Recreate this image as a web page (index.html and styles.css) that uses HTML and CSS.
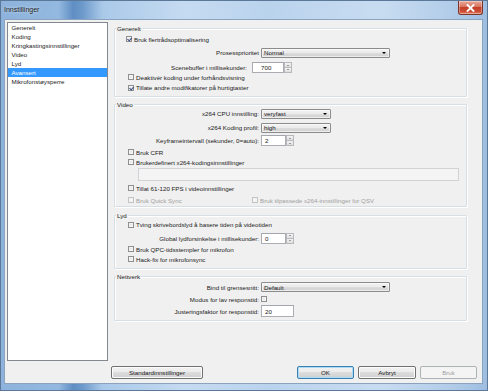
FILE: index.html
```html
<!DOCTYPE html>
<html>
<head>
<meta charset="utf-8">
<title>Innstillinger</title>
<link rel="stylesheet" href="styles.css">
</head>
<body>
<div class="window">
  <div class="titlebar">
    <span class="title">Innstillinger</span>
    <div class="close">
      <svg width="9" height="8" viewBox="0 0 9 8"><path d="M1.5 1 L7.5 7 M7.5 1 L1.5 7" stroke="#fff" stroke-width="1.8" stroke-linecap="square"/></svg>
    </div>
  </div>
  <div class="client">
    <div class="main">
      <ul class="list">
        <li>Generelt</li>
        <li>Koding</li>
        <li>Kringkastingsinnstillinger</li>
        <li>Video</li>
        <li>Lyd</li>
        <li class="sel">Avansert</li>
        <li>Mikrofonstøysperre</li>
      </ul>
      <div class="panel">
        <div class="group g-gen">
          <div class="gtitle"><span>Generelt</span></div>
          <div class="row cb r-cb1"><span class="box on"></span><span class="ct">Bruk flertrådsoptimalisering</span></div>
          <div class="row fld r-prio"><span class="lbl">Prosessprioritet</span><div class="combo wide"><span>Normal</span><i class="arr"></i></div></div>
          <div class="row fld r-scene"><span class="lbl lbl-short">Scenebuffer i millisekunder:</span><div class="edit e-scene">700</div><div class="spin"><b><i class="up"></i></b><b><i class="dn"></i></b></div></div>
          <div class="row cb r-deakt"><span class="box"></span><span class="ct">Deaktivér koding under forhåndsvisning</span></div>
          <div class="row cb r-till"><span class="box on"></span><span class="ct">Tillate andre modifikatorer på hurtigtaster</span></div>
        </div>
        <div class="group g-vid">
          <div class="gtitle"><span>Video</span></div>
          <div class="row fld r-cpu"><span class="lbl">x264 CPU innstilling:</span><div class="combo narrow"><span>veryfast</span><i class="arr"></i></div></div>
          <div class="row fld r-prof"><span class="lbl">x264 Koding profil:</span><div class="combo narrow"><span>high</span><i class="arr"></i></div></div>
          <div class="row fld r-key"><span class="lbl">Keyframeintervall (sekunder, 0=auto):</span><div class="edit e-num">2</div><div class="spin"><b><i class="up"></i></b><b><i class="dn"></i></b></div></div>
          <div class="row cb r-cfr"><span class="box"></span><span class="ct">Bruk CFR</span></div>
          <div class="row cb r-def"><span class="box"></span><span class="ct">Brukerdefinert x264-kodingsinnstillinger</span></div>
          <div class="row r-wide"><div class="edit e-wide dis"></div></div>
          <div class="row cb r-fps"><span class="box"></span><span class="ct">Tillat 61-120 FPS i videoinnstillinger</span></div>
          <div class="row cb r-qs dis">
            <span class="item i-qs"><span class="box"></span><span class="ct">Bruk Quick Sync</span></span>
            <span class="item"><span class="box"></span><span class="ct">Bruk tilpassede x264-innstillinger for QSV</span></span>
          </div>
        </div>
        <div class="group g-lyd">
          <div class="gtitle"><span>Lyd</span></div>
          <div class="row cb r-tving"><span class="box"></span><span class="ct">Tving skrivebordslyd å basere tiden på videotiden</span></div>
          <div class="row fld r-glob"><span class="lbl">Global lydforsinkelse i millisekunder:</span><div class="edit e-num">0</div><div class="spin"><b><i class="up"></i></b><b><i class="dn"></i></b></div></div>
          <div class="row cb r-qpc"><span class="box"></span><span class="ct">Bruk QPC-tidsstempler for mikrofon</span></div>
          <div class="row cb r-hack"><span class="box"></span><span class="ct">Hack-fix for mikrofonsync</span></div>
        </div>
        <div class="group g-net">
          <div class="gtitle"><span>Nettverk</span></div>
          <div class="row fld r-bind"><span class="lbl">Bind til grensesnitt:</span><div class="combo wide"><span>Default</span><i class="arr"></i></div></div>
          <div class="row fld r-modus"><span class="lbl">Modus for lav responstid:</span><span class="box"></span></div>
          <div class="row fld r-just"><span class="lbl">Justeringsfaktor for responstid:</span><div class="edit e-just">20</div></div>
        </div>
      </div>
    </div>
    <div class="buttons">
      <div class="btn b-std">Standardinnstillinger</div>
      <div class="btn b-ok def">OK</div>
      <div class="btn b-cancel">Avbryt</div>
      <div class="btn b-apply dis">Bruk</div>
    </div>
  </div>
</div>
</body>
</html>
```

FILE: styles.css
```css
* { box-sizing: border-box; margin: 0; padding: 0; }
html, body { width: 488px; height: 391px; overflow: hidden; }
body {
  font-family: "Liberation Sans", Arial, sans-serif;
  font-size: 6.2px;
  color: #1a1a1a;
  background: #fff;
}
.window {
  width: 488px;
  height: 391px;
  display: flex;
  flex-direction: column;
  background:
    linear-gradient(90deg, #8db3dc 0, #94b9e0 12%, #5f8ec3 15%, #6e9acb 17%, #aac9e9 21%, #c5dbf1 38%, #bad3ed 55%, #c8dcf1 78%, #b3cde9 92%, #9dbde0 100%);
  box-shadow: inset 0 0 0 1px #5b7898;
}
.titlebar {
  height: 20px;
  display: flex;
  align-items: flex-start;
  padding-left: 4px;
}
.title {
  font-size: 7px;
  line-height: 7px;
  margin-top: 6px;
  color: #1b1b1b;
  text-shadow: 0 0 3px #e8f2fc;
}
.close {
  margin-left: auto;
  margin-right: 5px;
  margin-top: 1px;
  width: 25px;
  height: 14px;
  border: 1px solid #7a3528;
  border-top: none;
  border-radius: 0 0 3px 3px;
  background: linear-gradient(#e9a99a 0, #d8735f 45%, #c3412a 50%, #cc4a32 80%, #e2866e 100%);
  display: flex;
  align-items: center;
  justify-content: center;
  box-shadow: inset 0 0 0 1px rgba(255,255,255,0.35);
}
.client {
  flex: 1;
  margin: 0 6px 8px 5px;
  background: #f0f0f0;
  display: flex;
  flex-direction: column;
  box-shadow: 0 0 0 1px #8aa4c0;
}
.main {
  display: flex;
  height: 341px;
  padding: 2px 0 0 2px;
}
.list {
  width: 101px;
  height: 339px;
  border: 1px solid #828790;
  background: #fff;
  list-style: none;
}
.list li {
  height: 9px;
  line-height: 9px;
  padding-left: 3.5px;
  white-space: nowrap;
}
.list li.sel { background: #3399ff; color: #fff; }

.panel {
  margin-left: 6px;
  width: 353px;
  display: flex;
  flex-direction: column;
}
.group {
  border: 1px solid #d5dfe5;
  box-shadow: inset 1px 1px 0 #fff, 1px 1px 0 #fff;
  border-radius: 1px;
  display: flex;
  flex-direction: column;
}
.g-gen { margin-top: 6px; height: 69px; }
.g-vid { margin-top: 7px; height: 103px; }
.g-lyd { margin-top: 8px; height: 54px; }
.g-net { margin-top: 7px; height: 45px; }
.gtitle { height: 0; }
.gtitle span {
  display: inline-block;
  line-height: 7px;
  transform: translateY(-4px);
  background: #f0f0f0;
  padding: 0 1px;
  margin-left: 1px;
}
.row {
  display: flex;
  align-items: center;
  height: 9px;
  white-space: nowrap;
}
.row.fld { height: 10px; }
.cb { padding-left: 13px; }
.item { display: flex; align-items: center; }
.i-qs { width: 124px; flex: none; }
.box {
  width: 6px;
  height: 6px;
  border: 1px solid #8e8f8f;
  background: linear-gradient(135deg, #dcdcdc, #fbfbfb);
  box-shadow: inset 0 0 0 1px #f4f4f4;
  flex: none;
  position: relative;
}
.box.on::after {
  content: "";
  position: absolute;
  left: 1px;
  top: 0px;
  width: 2px;
  height: 3px;
  border-right: 1px solid #3b4c80;
  border-bottom: 1px solid #3b4c80;
  transform: rotate(40deg);
}
.ct { margin-left: 2px; }
.dis .ct { color: #a0a0a0; }
.dis .box { border-color: #c4c4c4; background: #f4f4f4; box-shadow: none; }

.lbl { width: 144px; text-align: right; margin-right: 2px; flex: none; }
.lbl-short { width: 132px; margin-right: 5px; }

.combo {
  height: 10px;
  border: 1px solid #8b8b8b;
  border-radius: 1px;
  background: linear-gradient(#f2f2f2 0, #ebebeb 50%, #dddddd 51%, #cfcfcf 100%);
  box-shadow: inset 0 0 0 1px rgba(255,255,255,0.6);
  display: flex;
  align-items: center;
  padding-left: 2px;
  padding-right: 3px;
}
.combo span { flex: 1; }
.combo.wide { width: 129px; }
.combo.narrow { width: 70px; }
.arr {
  width: 0; height: 0;
  border-left: 2px solid transparent;
  border-right: 2px solid transparent;
  border-top: 2px solid #000;
}
.edit {
  height: 10.5px;
  border: 1px solid #abadb3;
  border-top-color: #a3a6ad;
  background: #fff;
  display: flex;
  align-items: center;
  padding-left: 3px;
}
.e-scene { width: 32px; padding-left: 8px; }
.e-num { width: 25px; }
.e-just { width: 33px; height: 12px; }
.e-wide { width: 321px; height: 13px; margin-left: 23px; }
.edit.dis { background: #f4f4f4; border-color: #d1d3d7; }
.spin {
  width: 8px;
  height: 10.5px;
  display: flex;
  flex-direction: column;
}
.spin b {
  flex: 1;
  border: 1px solid #b7b9bd;
  background: linear-gradient(#f4f4f4, #dedede);
  display: flex;
  align-items: center;
  justify-content: center;
}
.spin b + b { border-top: none; }
.spin i { width: 0; height: 0; border-left: 1.5px solid transparent; border-right: 1.5px solid transparent; }
.spin i.up { border-bottom: 1.5px solid #4d4d4d; }
.spin i.dn { border-top: 1.5px solid #4d4d4d; }

/* row placement */
.r-cb1 { margin-top: 5.5px; padding-left: 11px; }
.r-prio { margin-top: 4px; }
.r-scene { margin-top: 5px; }
.r-deakt { margin-top: 0; }
.r-till { margin-top: 1.5px; }

.r-cpu { margin-top: 3.5px; }
.r-prof { margin-top: 4px; }
.r-key { margin-top: 3px; height: 11px; }
.r-key .edit, .r-key .spin, .r-glob .edit, .r-glob .spin { height: 11px; }
.r-cfr { margin-top: 2px; }
.r-def { margin-top: 1px; }
.r-wide { margin-top: 1.5px; height: 13px; }
.r-fps { margin-top: 2.5px; }
.r-qs { margin-top: 3px; }

.r-tving { margin-top: 4px; }
.r-glob { margin-top: 4px; height: 11px; }
.r-qpc { margin-top: 1.5px; }
.r-hack { margin-top: 1px; }

.r-bind { margin-top: 5px; }
.r-modus { margin-top: 2px; height: 9px; }
.r-just { margin-top: 2px; height: 12px; }

.buttons {
  display: flex;
  margin-top: 5px;
  padding-left: 106px;
  padding-right: 5px;
  gap: 4px;
}
.btn {
  height: 13px;
  border: 1px solid #707070;
  border-radius: 2px;
  background: linear-gradient(#f2f2f2 0, #ebebeb 45%, #dddddd 50%, #cfcfcf 100%);
  box-shadow: inset 0 0 0 1px #fcfcfc;
  display: flex;
  align-items: center;
  justify-content: center;
}
.b-std { width: 92px; margin-right: auto; }
.b-ok { width: 57px; }
.b-cancel { width: 58px; }
.b-apply { width: 57px; }
.btn.def { border-color: #3c7fb1; box-shadow: inset 0 0 0 1px #a8dcf8; }
.btn.dis { border-color: #adb2b5; background: #f4f4f4; color: #a0a0a0; box-shadow: none; }
```
